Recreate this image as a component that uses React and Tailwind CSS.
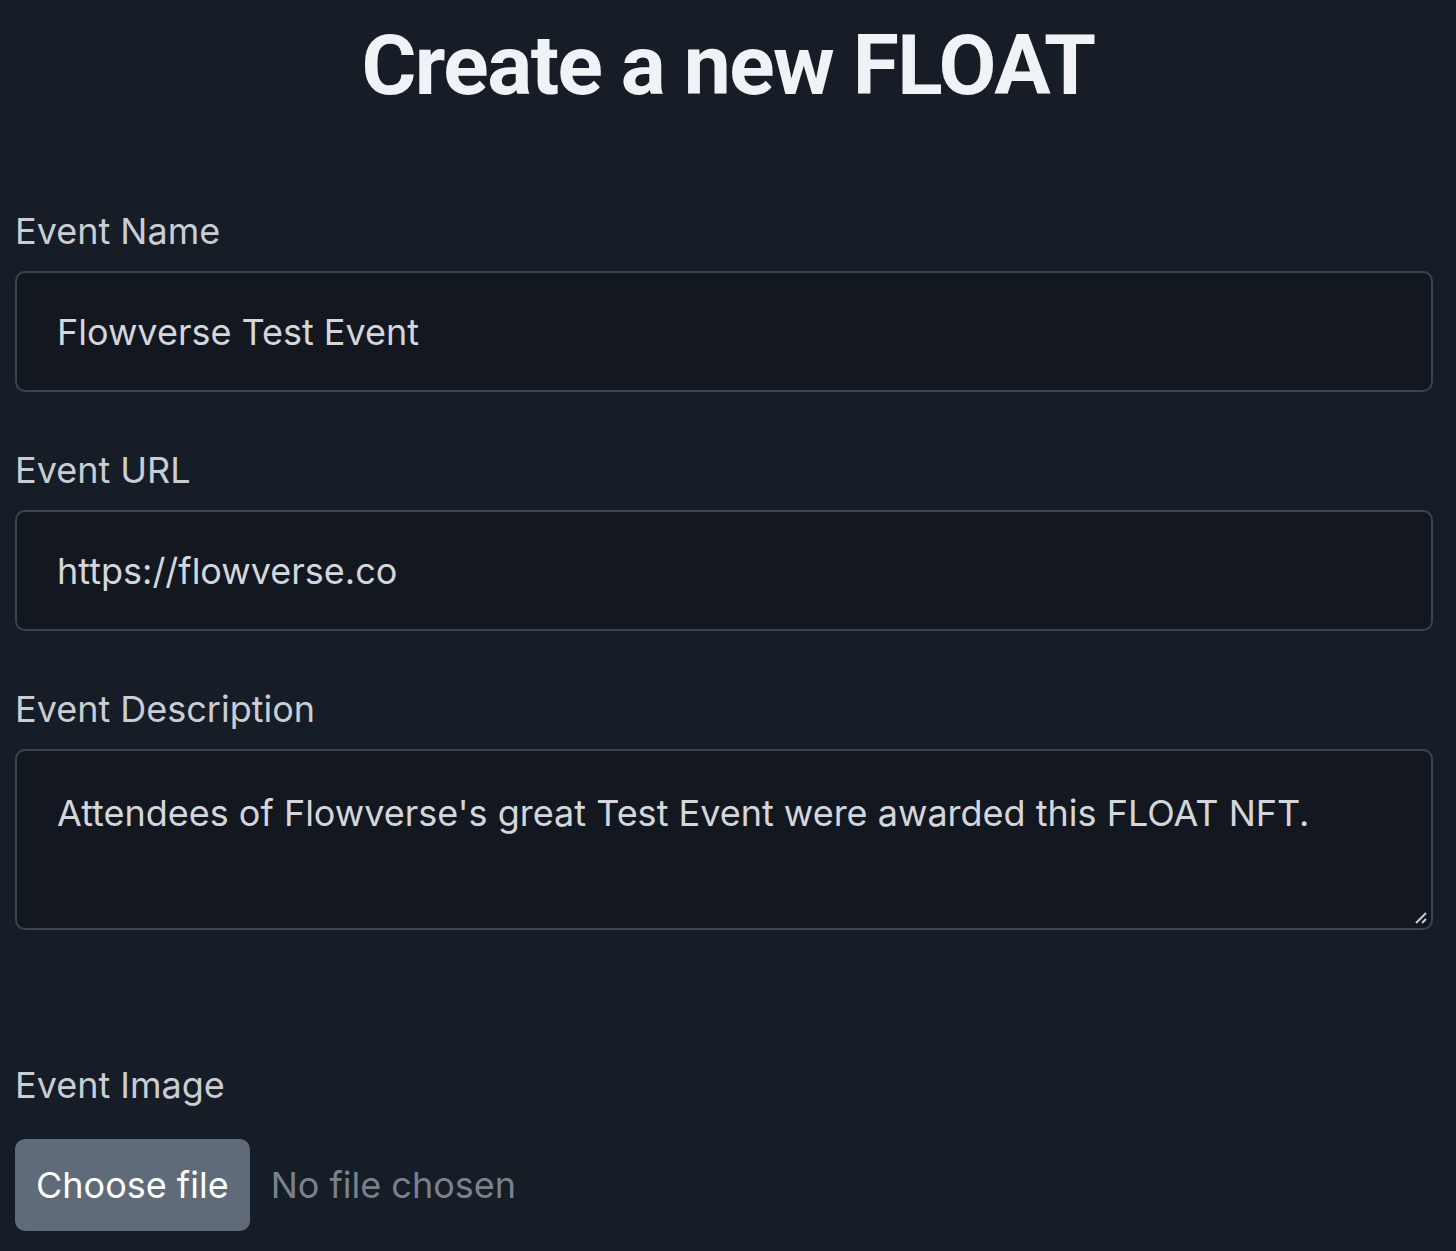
export default function App() {
  return (
    <div
      className="min-h-[1251px] w-full bg-[#161d26] text-[#c9ced4]"
      style={{ fontFamily: 'Inter, "Noto Sans", sans-serif' }}
    >
      <h1
        className="pt-[22px] text-center text-[84px] font-bold leading-[88px] tracking-[-1.5px] text-[#f0f2f5]"
        style={{ fontFamily: 'Roboto, "Liberation Sans", sans-serif' }}
      >
        Create a new FLOAT
      </h1>

      <div className="mt-[99px] flex flex-col px-[15px] pr-[23px]">
        <label className="text-[36px] leading-[44px]">Event Name</label>
        <div className="mt-[18px] flex h-[121px] items-center rounded-[10px] border-2 border-[#3a4550] bg-[#131820] pl-[40px] text-[36px] text-[#d3d7dc]">
          Flowverse Test Event
        </div>

        <label className="mt-[56px] text-[36px] leading-[44px]">Event URL</label>
        <div className="mt-[18px] flex h-[121px] items-center rounded-[10px] border-2 border-[#3a4550] bg-[#131820] pl-[40px] text-[36px] text-[#d3d7dc]">
          https://flowverse.co
        </div>

        <label className="mt-[56px] text-[36px] leading-[44px]">Event Description</label>
        <div className="relative mt-[18px] h-[181px] rounded-[10px] border-2 border-[#3a4550] bg-[#131820] pl-[40px] pt-[38px] text-[36px] leading-[48px] text-[#d3d7dc]">
          Attendees of Flowverse's great Test Event were awarded this FLOAT NFT.
          <svg className="absolute bottom-[3px] right-[3px]" width="14" height="14" viewBox="0 0 14 14">
            <line x1="2" y1="12" x2="12" y2="2" stroke="#c9ced4" strokeWidth="2" />
            <line x1="8" y1="12" x2="12" y2="8" stroke="#c9ced4" strokeWidth="2" />
          </svg>
        </div>

        <label className="mt-[133px] text-[36px] leading-[44px]">Event Image</label>
        <div className="mt-[32px] flex items-center gap-[21px]">
          <button className="h-[92px] rounded-[10px] bg-[#5f6b78] px-[21px] text-[36px] text-white">
            Choose file
          </button>
          <span className="text-[36px] text-[#79828c]">No file chosen</span>
        </div>
      </div>
    </div>
  )
}
